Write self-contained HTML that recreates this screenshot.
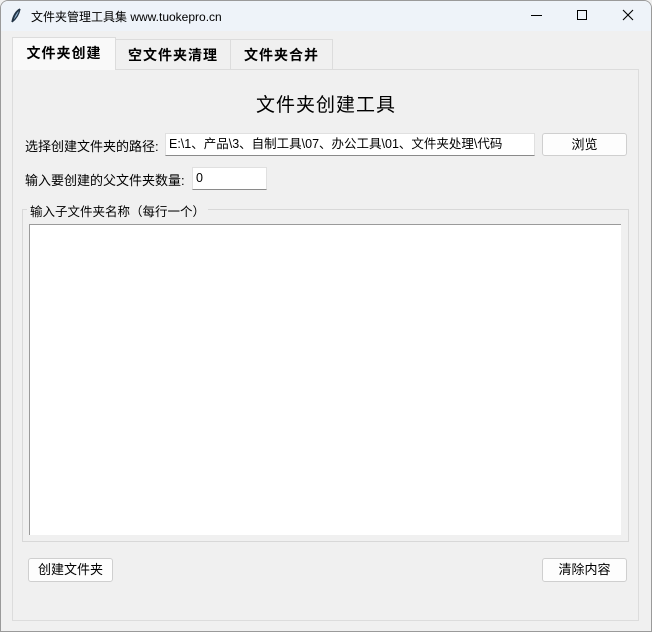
<!DOCTYPE html><html><head><meta charset="utf-8"><style>
*{box-sizing:border-box;margin:0;padding:0}
body{width:652px;height:632px;background:#f0f0f0;font-family:"Liberation Sans","Noto Sans CJK SC",sans-serif;font-size:13px;color:#000;position:relative;overflow:hidden}
.a{position:absolute}
.win{left:0;top:0;width:652px;height:632px;border:1px solid #9a9a9a;border-radius:8px 8px 0 0}
.tb{left:1px;top:1px;width:650px;height:30px;background:#eef3f9;border-radius:7px 7px 0 0}
.tab{height:31px;border:1px solid #dcdcdc;border-bottom:none;font-weight:bold;font-size:14px;text-align:center;line-height:30px;letter-spacing:1px}
.btn{background:#fdfdfd;border:1px solid #cfcfcf;border-radius:3px;text-align:center;line-height:21px;font-size:13px}
.ent{background:#fff;border:1px solid #e0e0e0;border-bottom:1px solid #8a8a8a;padding-left:3px;line-height:21px;font-size:12.5px}
</style></head><body>
<div class="a win"></div>
<div class="a tb"></div>
<svg class="a" style="left:10px;top:8px" width="12" height="16" viewBox="0 0 12 16"><path d="M10 1C6 3 3 8 2 14M10 1C9 6 6 11 2 14M10 1C5 5 4 9 3 12" stroke="#234" stroke-width="1.3" fill="#8fb0d0"/></svg>
<div class="a" style="left:31px;top:8px;font-size:12px">文件夹管理工具集 www.tuokepro.cn</div>
<div class="a" style="left:531px;top:15px;width:11px;height:1px;background:#000"></div>
<div class="a" style="left:577px;top:10px;width:10px;height:10px;border:1px solid #000"></div>
<svg class="a" style="left:622px;top:9px" width="12" height="12"><path d="M1 1L11 11M11 1L1 11" stroke="#000" stroke-width="1.1"/></svg>
<div class="a" style="left:12px;top:69px;width:627px;height:552px;border:1px solid #dcdcdc"></div>
<div class="a tab" style="left:12px;top:37px;width:104px;height:33px;background:#f9f9f9">文件夹创建</div>
<div class="a tab" style="left:115px;top:39px;width:116px;height:30px">空文件夹清理</div>
<div class="a tab" style="left:230px;top:39px;width:103px;height:30px">文件夹合并</div>
<div class="a" style="left:0;width:652px;top:90px;text-align:center;font-size:19px;letter-spacing:1px">文件夹创建工具</div>
<div class="a" style="left:25px;top:136px">选择创建文件夹的路径:</div>
<div class="a ent" style="left:165px;top:133px;width:370px;height:23px">E:\1、产品\3、自制工具\07、办公工具\01、文件夹处理\代码</div>
<div class="a btn" style="left:542px;top:133px;width:85px;height:23px">浏览</div>
<div class="a" style="left:25px;top:170px">输入要创建的父文件夹数量:</div>
<div class="a ent" style="left:192px;top:167px;width:75px;height:23px">0</div>
<div class="a" style="left:22px;top:209px;width:607px;height:333px;border:1px solid #d8d8d8"></div>
<div class="a" style="left:27px;top:201px;padding:0 3px;background:#f0f0f0;font-size:12.5px">输入子文件夹名称（每行一个）</div>
<div class="a" style="left:29px;top:224px;width:592px;height:311px;background:#fff;border-top:1px solid #9a9a9a;border-left:1px solid #9a9a9a"></div>
<div class="a btn" style="left:28px;top:558px;width:85px;height:24px">创建文件夹</div>
<div class="a btn" style="left:542px;top:558px;width:85px;height:24px">清除内容</div>
</body></html>
